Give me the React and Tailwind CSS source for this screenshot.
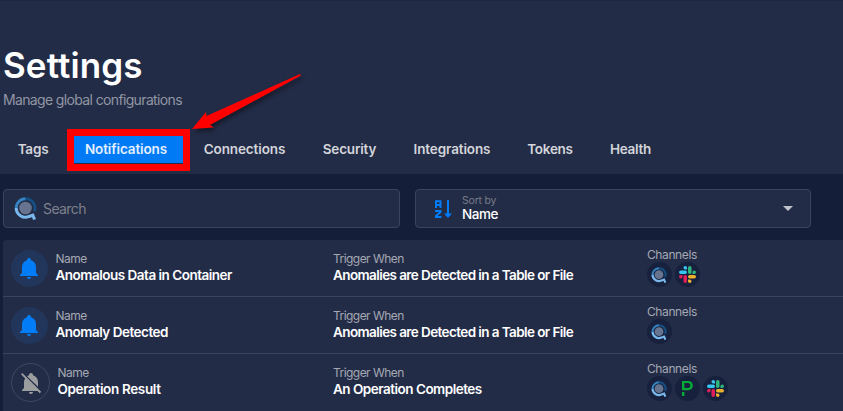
import React from "react";

function QLogo({ className }) {
  return (
    <svg viewBox="0 0 24 24" className={className} fill="none">
      <circle cx="12" cy="11.5" r="6.6" fill="#66748f" />
      <path d="M12 1.8A9.7 9.7 0 0 1 21.2 15" stroke="#164f82" strokeWidth="3" />
      <path d="M2.3 11.5A9.7 9.7 0 0 1 12 1.8" stroke="#3583c0" strokeWidth="3" />
      <path d="M2.3 11.5A9.7 9.7 0 0 0 15.8 20.3L19.6 18.9L21.5 23.5" stroke="#79b7ec" strokeWidth="3.2" />
    </svg>
  );
}

function SlackLogo() {
  return (
    <svg viewBox="0 0 24 24" className="size-[17px]">
      <path fill="#36c5f0" d="M8.8 0a2.5 2.5 0 1 0 0 5h2.5V2.5A2.5 2.5 0 0 0 8.8 0M8.8 6.3H2.5a2.5 2.5 0 0 0 0 5h6.3a2.5 2.5 0 0 0 0-5" />
      <path fill="#2eb67d" d="M24 8.8a2.5 2.5 0 0 0-5 0v2.5h2.5A2.5 2.5 0 0 0 24 8.8M17.7 8.8V2.5a2.5 2.5 0 0 0-5 0v6.3a2.5 2.5 0 0 0 5 0" />
      <path fill="#ecb22e" d="M15.2 24a2.5 2.5 0 0 0 0-5h-2.5v2.5a2.5 2.5 0 0 0 2.5 2.5M15.2 17.7h6.3a2.5 2.5 0 0 0 0-5h-6.3a2.5 2.5 0 0 0 0 5" />
      <path fill="#e01e5a" d="M0 15.2a2.5 2.5 0 0 0 5 0v-2.5H2.5A2.5 2.5 0 0 0 0 15.2M6.3 15.2v6.3a2.5 2.5 0 0 0 5 0v-6.3a2.5 2.5 0 0 0-5 0" />
    </svg>
  );
}

function PagerDutyLogo() {
  return (
    <svg viewBox="0 0 11 15" className="h-[15px] w-[11px]" fill="#06ac38">
      <path fillRule="evenodd" d="M0 0H6.2C9 0 10.8 1.8 10.8 4.6S9 9.2 6.2 9.2H0ZM2.4 2.1V7.1H6C7.5 7.1 8.3 6.1 8.3 4.6S7.5 2.1 6 2.1Z" />
      <path d="M0 11h2.4v4H0z" />
    </svg>
  );
}

function Bell({ off }) {
  return off ? (
    <svg viewBox="0 0 24 24" className="size-6" fill="#9c9d9e">
      <path d="M22.1 20.7 3.3 2 2 3.3l4.1 4.2C5.4 8.6 5 9.8 5 11v6l-2 2v1h15.6l2.2 2.2zM19 15.8V11c0-3.1-2-5.8-5-6.7V4a2 2 0 0 0-4 0v.3c-.7.2-1.4.5-2 .9zM14 21a2 2 0 0 1-4 0" />
    </svg>
  ) : (
    <svg viewBox="0 0 24 24" className="mr-px size-6" fill="#027cf7">
      <path d="M21 19v1H3v-1l2-2v-6c0-3.1 2-5.8 5-6.7V4a2 2 0 0 1 4 0v.3c3 .9 5 3.6 5 6.7v6zm-7 2a2 2 0 0 1-4 0" />
    </svg>
  );
}

const tabs = [
  ["Tags", "w-[67px] pr-px", "tracking-[-0.2px]"],
  ["Notifications", "w-[118px]", "tracking-[-0.12px]"],
  ["Connections", "w-[119px]", "tracking-[-0.12px]"],
  ["Security", "w-[91px]", "tracking-[-0.18px]"],
  ["Integrations", "w-[114px]", "tracking-[-0.12px]"],
  ["Tokens", "w-[82px]", "tracking-[-0.28px]"],
  ["Health", "w-[79px]", "tracking-[-0.28px]"],
];

const rows = [
  { name: "Anomalous Data in Container", trigger: "Anomalies are Detected in a Table or File", channels: ["q", "slack"] },
  { name: "Anomaly Detected", trigger: "Anomalies are Detected in a Table or File", channels: ["q"] },
  { name: "Operation Result", trigger: "An Operation Completes", channels: ["q", "pd", "slack"], off: true },
];

function Field({ label, value, tracking }) {
  return (
    <div className="whitespace-nowrap">
      <div className="text-[12px] leading-[16px] tracking-[-0.55px] text-[#a4a8b3]">{label}</div>
      <div className={"text-[13.5px] font-semibold leading-[17px] text-white " + tracking}>{value}</div>
    </div>
  );
}

function Row({ row, last }) {
  return (
    <div className={"flex h-[57px] " + (last ? "" : "border-b border-[#3b445e]")}>
      <div className="flex w-[330px] items-center pl-2">
        <div
          className={
            "mr-[7.5px] flex shrink-0 items-center justify-center rounded-full " +
            (row.off ? "size-[39px] border border-[#3f4861]" : "size-[37px] bg-[#22365b]")
          }
        >
          <Bell off={row.off} />
        </div>
        <div className={row.off ? "pb-[2px]" : "pb-[1px]"}>
          <Field label="Name" value={row.name} tracking={row.off ? "tracking-[-0.35px]" : "tracking-[-0.5px]"} />
        </div>
      </div>
      <div className={"flex w-[314px] items-center " + (row.off ? "pb-[2px]" : "pb-[1px]")}>
        <Field label="Trigger When" value={row.trigger} tracking={row.off ? "tracking-[-0.5px]" : "tracking-[-0.59px]"} />
      </div>
      <div className="pt-[8px]">
        <div className="text-[12px] leading-[14px] tracking-[-0.4px] text-[#a4a8b3]">Channels</div>
        <div className="flex gap-[3.2px]">
          {row.channels.map((c) => (
            <div key={c} className="flex size-[25px] items-center justify-center rounded-full bg-[#17203c]">
              {c === "q" && <QLogo className="mr-px size-4" />}
              {c === "slack" && <SlackLogo />}
              {c === "pd" && <PagerDutyLogo />}
            </div>
          ))}
        </div>
      </div>
    </div>
  );
}

export default function App() {
  return (
    <div className="relative h-[411px] w-[843px] overflow-hidden bg-[#151e39] font-['Inter',sans-serif]">
      <header className="h-[174px] border-t border-[#1f2842] bg-[#232c47] pt-[43px]">
        <h1 className="pl-[3px] text-[35px] font-semibold leading-[42px] tracking-[0.1px] text-white">Settings</h1>
        <p className="pl-[3px] pt-1 text-[14px] leading-5 tracking-[-0.64px] text-[#9196a3]">Manage global configurations</p>
        <nav className="flex pt-[25px]">
          {tabs.map(([label, width, tracking]) => (
            <div
              key={label}
              className={
                "flex h-[28px] items-center justify-center whitespace-nowrap text-[13.5px] font-semibold " +
                width + " " + tracking + " " +
                (label === "Notifications" ? "bg-[#007bf5] text-[#e3effd]" : "text-[#d3d5da]")
              }
            >
              {label}
            </div>
          ))}
        </nav>
      </header>
      <div className="flex gap-[15px] pl-[3px] pt-[15px]">
        <div className="flex h-[39px] w-[397px] items-center rounded-[4px] border border-[#3b445d] bg-[#232c47] pl-[10px]">
          <QLogo className="size-[23px]" />
          <span className="pb-px pl-[6px] text-[14px] tracking-[-0.6px] text-[#7d818c]">Search</span>
        </div>
        <div className="flex h-[39px] w-[396px] items-center rounded-[4px] border border-[#3b445d] bg-[#232c47] pl-[19px] pr-[17px]">
          <svg viewBox="0 0 18 18" className="size-[18px]" fill="none" stroke="#027cf7" strokeWidth="2">
            <path d="M1 8V1.2H5.5V8M1 5H5.5M0 11H5.5V12L1 16V17H6.5M13 0V16" />
            <path d="M9 13.5H17L13 18Z" fill="#027cf7" stroke="none" />
          </svg>
          <div className="flex-1 pb-[2px] pl-[9px]">
            <div className="text-[10.5px] leading-[13px] tracking-[-0.2px] text-[#777b87]">Sort by</div>
            <div className="text-[13.5px] font-medium leading-[14px] tracking-[-0.45px] text-white">Name</div>
          </div>
          <svg viewBox="0 0 10 5" className="h-[5px] w-[10px]" fill="#c0c3cb">
            <path d="M0 0H10L5 5Z" />
          </svg>
        </div>
      </div>
      <div className="ml-[3px] mt-3 rounded-tl-[4px] bg-[#232c47]">
        {rows.map((row, i) => (
          <Row key={row.name} row={row} last={i === rows.length - 1} />
        ))}
      </div>
      <div className="absolute left-[67px] top-[129px] h-[42px] w-[123px] border-[7px] border-[#fe0000]" />
      <svg viewBox="0 0 125 70" className="absolute left-[185px] top-[66px] h-[70px] w-[125px] drop-shadow-[2px_3px_2px_rgba(0,0,0,0.4)]">
        <path d="M115 8L116 9.5L25 59L29 61.5L7 63L21 46L21.5 50Z" fill="#fe0000" />
      </svg>
    </div>
  );
}
